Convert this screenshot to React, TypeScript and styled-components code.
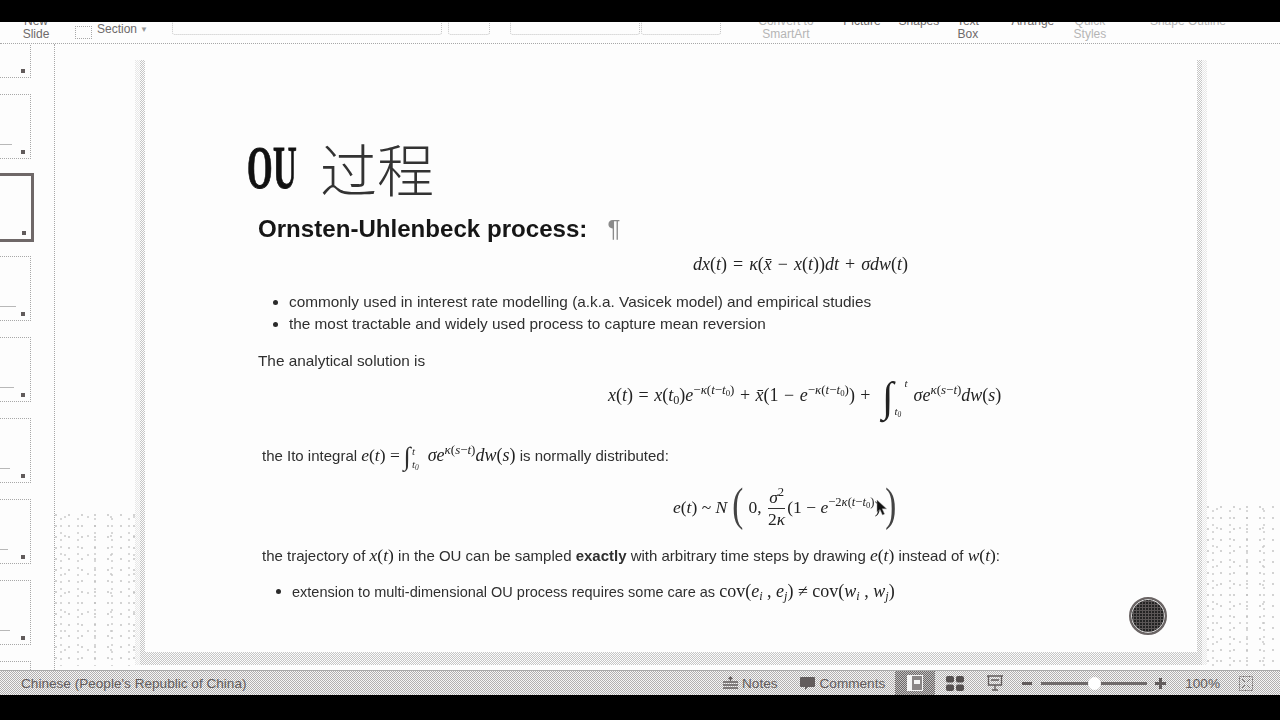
import styled, { createGlobalStyle } from "styled-components";

const GlobalStyle = createGlobalStyle`
  html, body { margin: 0; padding: 0; background: #000; }
  body { font-family: "Liberation Sans", Arial, sans-serif; }
`;

const stipple = `
  background-image:
    radial-gradient(circle at 1px 1px, #bcbcbc 0.6px, transparent 0.9px),
    radial-gradient(circle at 1px 1px, #c4c4c4 0.6px, transparent 0.9px),
    radial-gradient(circle at 1px 1px, #c4c4c4 0.6px, transparent 0.9px);
  background-size: 13px 11px, 17px 7px, 23px 19px;
  background-position: 0 0, 5px 4px, 9px 2px;
`;

const checker = `
  background-image: repeating-conic-gradient(#b2b0b0 0 25%, #f6f6f6 0 50%);
  background-size: 2px 2px;
`;

const Page = styled.div`
  width: 1280px;
  height: 720px;
  display: flex;
  flex-direction: column;
  overflow: hidden;
  background: #000;
`;

const TopBlack = styled.div`
  height: 22px;
  flex: none;
  background: #000;
`;

const Ribbon = styled.div`
  height: 21px;
  flex: none;
  display: flex;
  align-items: flex-end;
  overflow: hidden;
  background: #fdfdfd;
  border-bottom: 1px dotted #a8a8a8;
`;

const RibbonLabel = styled.div<{ $left: number; $width: number; $faint?: boolean; $oneLine?: boolean }>`
  flex: none;
  margin-left: ${(p) => p.$left}px;
  width: ${(p) => p.$width}px;
  padding-bottom: ${(p) => (p.$oneLine ? 15 : 2)}px;
  font-size: 12px;
  line-height: 13px;
  text-align: center;
  white-space: nowrap;
  color: ${(p) => (p.$faint ? "#b5b5b5" : "#6e6a6a")};
`;

const RibbonGhost = styled.div<{ $left: number; $width: number }>`
  flex: none;
  margin-left: ${(p) => p.$left}px;
  margin-bottom: 8px;
  width: ${(p) => p.$width}px;
  height: 14px;
  box-sizing: border-box;
  border: 1px dotted #c4c4c4;
  border-top: none;
  border-radius: 0 0 3px 3px;
`;

const SectionIcon = styled.div`
  flex: none;
  margin-left: 23px;
  margin-bottom: 4px;
  width: 17px;
  height: 13px;
  box-sizing: border-box;
  border: 1px dotted #a8a8a8;
`;

const SectionLabel = styled.div`
  flex: none;
  margin-left: 5px;
  margin-bottom: 6px;
  font-size: 12px;
  line-height: 14px;
  color: #6e6a6a;
`;

const Caret = styled.span`
  font-size: 8px;
  margin-left: 3px;
  color: #999;
  vertical-align: 1px;
`;

const Main = styled.div`
  flex: 1;
  display: flex;
  min-height: 0;
  background: #fdfdfd;
`;

const Sidebar = styled.aside`
  width: 54px;
  flex: none;
  overflow: hidden;
  border-right: 1px dotted #a8a8a8;
`;

const ThumbList = styled.div`
  margin-top: -31px;
  display: flex;
  flex-direction: column;
  gap: 16px;
`;

const Thumb = styled.div<{ $active?: boolean }>`
  position: relative;
  flex: none;
  box-sizing: border-box;
  width: ${(p) => (p.$active ? 34 : 31)}px;
  height: ${(p) => (p.$active ? 69 : 65)}px;
  margin: ${(p) => (p.$active ? "-2px 0" : "0")};
  border: ${(p) => (p.$active ? "3px solid #6f6868" : "1px dotted #a8a8a8")};
  border-left: none;
`;

const ThumbMark = styled.span`
  position: absolute;
  right: 5px;
  bottom: 4px;
  width: 4px;
  height: 4px;
  background: #615b5b;
`;

const ThumbLine = styled.span<{ $width: number }>`
  position: absolute;
  left: 0;
  bottom: 13px;
  width: ${(p) => p.$width}px;
  height: 1px;
  background: #b8b8b8;
`;

const Editor = styled.div`
  position: relative;
  flex: 1;
  padding: 11px 0 0 80px;
  display: flex;
  align-items: flex-start;
  &::before,
  &::after {
    content: "";
    position: absolute;
    bottom: 4px;
    ${stipple}
  }
  &::before {
    left: 0;
    width: 80px;
    height: 152px;
  }
  &::after {
    right: 0;
    width: 73px;
    height: 160px;
  }
`;

const SlideFrame = styled.div`
  position: relative;
  z-index: 1;
  padding: 5px 10px 13px;
  background-image:
    linear-gradient(#fdfdfd 5px, transparent 5px),
    linear-gradient(to right, rgba(253, 253, 253, 0.6) 5px, transparent 5px),
    linear-gradient(to left, rgba(253, 253, 253, 0.6) 5px, transparent 5px),
    repeating-conic-gradient(#c6c6c6 0 25%, #fdfdfd 0 50%);
  background-size: auto, auto, auto, 2px 2px;
`;

const Slide = styled.section`
  position: relative;
  width: 1052px;
  height: 592px;
  box-sizing: border-box;
  padding-left: 113px;
  display: flex;
  flex-direction: column;
  background: #fdfdfd;
  color: #2f2f2f;
  font-size: 15.35px;
  filter: blur(0.35px);
`;

const Title = styled.h1`
  margin: 78px 0 0 -11px;
  height: 58px;
  display: flex;
  align-items: center;
  font-weight: 400;
  color: #111;
`;

const TitleLatin = styled.span`
  display: inline-block;
  width: 73px;
  font-family: "Liberation Serif", serif;
  font-weight: 700;
  font-size: 62px;
  line-height: 58px;
  letter-spacing: 1px;
  -webkit-text-stroke: 1px #111;
  transform: scaleX(0.53);
  transform-origin: left center;
`;

const TitleCjk = styled.span`
  font-family: "Noto Sans CJK SC", sans-serif;
  font-weight: 300;
  font-size: 57px;
  line-height: 58px;
  color: #333;
`;

const Heading = styled.h2`
  margin: 19px 0 0;
  height: 28px;
  display: flex;
  align-items: center;
  font-size: 24.1px;
  font-weight: 700;
  color: #161616;
`;

const Pilcrow = styled.span`
  margin-left: 20px;
  font-weight: 400;
  color: #8b8b8b;
`;

const Display = styled.div<{ $top: number; $height: number; $indent: number; $size?: number; $word?: number }>`
  margin: ${(p) => p.$top}px 0 0 ${(p) => p.$indent}px;
  height: ${(p) => p.$height}px;
  line-height: ${(p) => p.$height}px;
  white-space: pre;
  font-family: "Liberation Serif", serif;
  font-size: ${(p) => p.$size ?? 18}px;
  word-spacing: ${(p) => p.$word ?? 0}px;
  color: #222;
`;

const Para = styled.p<{ $top: number; $height: number; $indent?: number; $size?: number }>`
  margin: ${(p) => p.$top}px 0 0 ${(p) => p.$indent ?? 0}px;
  height: ${(p) => p.$height}px;
  line-height: ${(p) => p.$height}px;
  font-size: ${(p) => p.$size ?? 15.35}px;
  white-space: pre;
`;

const BulletList = styled.ul<{ $top: number; $indent: number; $size?: number }>`
  list-style: none;
  margin: ${(p) => p.$top}px 0 0 ${(p) => p.$indent}px;
  padding: 0;
  font-size: ${(p) => p.$size ?? 15.35}px;
`;

const Bullet = styled.li`
  position: relative;
  height: 22px;
  line-height: 22px;
  white-space: pre;
  &::before {
    content: "";
    position: absolute;
    left: -16px;
    top: 9px;
    width: 5px;
    height: 5px;
    border-radius: 50%;
    background: #2b2b2b;
  }
`;

const InlineMath = styled.span<{ $size?: number }>`
  font-family: "Liberation Serif", serif;
  font-size: ${(p) => p.$size ?? 17.5}px;
  color: #222;
`;

const V = styled.i`
  font-family: "Liberation Serif", serif;
`;

const Sup = styled.sup`
  font-size: 0.72em;
  line-height: 0;
  vertical-align: 0.55em;
`;

const Sub = styled.sub`
  font-size: 0.68em;
  line-height: 0;
  vertical-align: -0.25em;
`;

const Integral = styled.span<{ $size: number; $before: number }>`
  font-family: "Liberation Serif", serif;
  font-size: ${(p) => p.$size}px;
  line-height: 1;
  vertical-align: middle;
  margin: 0 1px 0 ${(p) => p.$before}px;
`;

const Limits = styled.span<{ $gap: number; $after: number }>`
  display: inline-flex;
  flex-direction: column;
  vertical-align: middle;
  gap: ${(p) => p.$gap}px;
  margin-right: ${(p) => p.$after}px;
  font-family: "Liberation Serif", serif;
  font-size: 11px;
  line-height: 10px;
  font-style: italic;
`;

const UpperLimit = styled.span<{ $skew?: number }>`
  padding-left: ${(p) => p.$skew ?? 0}px;
`;

const BigParen = styled.span`
  font-size: 46px;
  line-height: 46px;
  display: inline-block;
  vertical-align: middle;
  margin: -8px 3px 0;
  font-weight: 400;
  color: #444;
  transform: scaleX(0.72);
`;

const Fraction = styled.span`
  display: inline-flex;
  flex-direction: column;
  align-items: center;
  vertical-align: middle;
  margin: 0 2px 0 2px;
  line-height: 21px;
`;

const FractionTop = styled.span`
  padding: 0 1px;
  border-bottom: 1px solid #333;
`;

const RecordButton = styled.div`
  position: absolute;
  left: 984px;
  top: 537px;
  width: 38px;
  height: 38px;
  box-sizing: border-box;
  border-radius: 50%;
  border: 2px solid #6a6464;
  box-shadow: inset 0 0 0 1px #d8d8d8;
  background-color: #5a5656;
  background-image: radial-gradient(circle at 1px 1px, #222 0.7px, transparent 1px);
  background-size: 3px 3px;
`;

const Cursor = styled.svg`
  position: absolute;
  left: 731px;
  top: 439px;
`;

const StatusBar = styled.footer`
  height: 25px;
  flex: none;
  display: flex;
  align-items: center;
  box-sizing: border-box;
  border-top: 1px solid #a9a9a9;
  ${checker}
  font-size: 13.6px;
  color: #625c5c;
`;

const Language = styled.span`
  margin-left: 21px;
  width: 227px;
  flex: none;
  white-space: nowrap;
`;

const StatusItem = styled.span<{ $left: number }>`
  display: flex;
  align-items: center;
  flex: none;
  margin-left: ${(p) => p.$left}px;
`;

const ViewButton = styled.span`
  flex: none;
  margin-left: 10px;
  width: 40px;
  height: 24px;
  display: flex;
  align-items: center;
  justify-content: center;
  background-image: repeating-conic-gradient(#6b6767 0 25%, #c2c0c0 0 50%);
  background-size: 2px 2px;
`;

const ZoomTrack = styled.span`
  position: relative;
  flex: none;
  margin-left: 9px;
  width: 106px;
  height: 3px;
  background: #6f6a6a;
`;

const ZoomKnob = styled.span`
  position: absolute;
  left: 47px;
  top: -5px;
  width: 13px;
  height: 13px;
  border-radius: 50%;
  background: #fff;
`;

const BottomBlack = styled.div`
  height: 25px;
  flex: none;
  background: #000;
`;

const thumbs = [
  { line: 0 },
  { line: 12 },
  { line: 0, active: true },
  { line: 16 },
  { line: 14 },
  { line: 10 },
  { line: 8 },
  { line: 10 },
  { line: 0 },
];

export default function App() {
  return (
    <>
      <GlobalStyle />
      <Page>
        <TopBlack />
        <Ribbon>
          <RibbonLabel $left={20} $width={32}>
            New
            <br />
            Slide
          </RibbonLabel>
          <SectionIcon />
          <SectionLabel>
            Section
            <Caret>▼</Caret>
          </SectionLabel>
          <RibbonGhost $left={24} $width={270} />
          <RibbonGhost $left={6} $width={42} />
          <RibbonGhost $left={20} $width={130} />
          <RibbonGhost $left={1} $width={80} />
          <RibbonLabel $left={36} $width={58} $faint>
            Convert to
            <br />
            SmartArt
          </RibbonLabel>
          <RibbonLabel $left={25} $width={44} $oneLine>
            Picture
          </RibbonLabel>
          <RibbonLabel $left={13} $width={44} $oneLine>
            Shapes
          </RibbonLabel>
          <RibbonLabel $left={12} $width={30}>
            Text
            <br />
            Box
          </RibbonLabel>
          <RibbonLabel $left={26} $width={48} $oneLine>
            Arrange
          </RibbonLabel>
          <RibbonLabel $left={15} $width={36} $faint>
            Quick
            <br />
            Styles
          </RibbonLabel>
          <RibbonLabel $left={40} $width={80} $faint $oneLine>
            Shape Outline
          </RibbonLabel>
        </Ribbon>
        <Main>
          <Sidebar>
            <ThumbList>
              {thumbs.map((t, i) => (
                <Thumb key={i} $active={t.active}>
                  {t.line > 0 && <ThumbLine $width={t.line} />}
                  <ThumbMark />
                </Thumb>
              ))}
            </ThumbList>
          </Sidebar>
          <Editor>
            <SlideFrame>
              <Slide>
                <Title>
                  <TitleLatin>OU</TitleLatin>
                  <TitleCjk>过程</TitleCjk>
                </Title>
                <Heading>
                  Ornsten-Uhlenbeck process:
                  <Pilcrow>¶</Pilcrow>
                </Heading>
                <Display $top={9} $height={24} $indent={435} $word={1.5}>
                  <V>dx</V>(<V>t</V>) = <V>κ</V>(<V>x̄</V> − <V>x</V>(<V>t</V>))<V>dt</V> + <V>σdw</V>(<V>t</V>)
                </Display>
                <BulletList $top={15} $indent={31}>
                  <Bullet>commonly used in interest rate modelling (a.k.a. Vasicek model) and empirical studies</Bullet>
                  <Bullet>the most tractable and widely used process to capture mean reversion</Bullet>
                </BulletList>
                <Para $top={16} $height={19}>
                  The analytical solution is
                </Para>
                <Display $top={0} $height={50} $indent={350} $word={1}>
                  <V>x</V>(<V>t</V>) = <V>x</V>(<V>t</V>
                  <Sub>0</Sub>)<V>e</V>
                  <Sup>
                    −<V>κ</V>(<V>t</V>−<V>t</V>
                    <Sub>0</Sub>)
                  </Sup>
                  {" + "}
                  <V>x̄</V>(1 − <V>e</V>
                  <Sup>
                    −<V>κ</V>(<V>t</V>−<V>t</V>
                    <Sub>0</Sub>)
                  </Sup>
                  {") + "}
                  <Integral $size={42} $before={6}>∫</Integral>
                  <Limits $gap={18} $after={6}>
                    <UpperLimit $skew={10}>t</UpperLimit>
                    <span>
                      t<Sub>0</Sub>
                    </span>
                  </Limits>
                  <V>σe</V>
                  <Sup>
                    <V>κ</V>(<V>s</V>−<V>t</V>)
                  </Sup>
                  <V>dw</V>(<V>s</V>)
                </Display>
                <Para $top={20} $height={30} $indent={4} $size={15}>
                  {"the Ito integral "}
                  <InlineMath>
                    <V>e</V>(<V>t</V>) =
                  </InlineMath>
                  <Integral $size={26} $before={4}>∫</Integral>
                  <Limits $gap={3} $after={9}>
                    <UpperLimit>t</UpperLimit>
                    <span>
                      t<Sub>0</Sub>
                    </span>
                  </Limits>
                  <InlineMath $size={18}>
                    <V>σe</V>
                    <Sup>
                      <V>κ</V>(<V>s</V>−<V>t</V>)
                    </Sup>
                    <V>dw</V>(<V>s</V>)
                  </InlineMath>
                  {" is normally distributed:"}
                </Para>
                <Display $top={7} $height={60} $indent={415} $size={17.5}>
                  <V>e</V>(<V>t</V>) ~ <V>N</V>
                  <BigParen>(</BigParen>
                  {"0, "}
                  <Fraction>
                    <FractionTop>
                      <V>σ</V>
                      <Sup>2</Sup>
                    </FractionTop>
                    <span>
                      2<V>κ</V>
                    </span>
                  </Fraction>
                  (1 − <V>e</V>
                  <Sup>
                    −2<V>κ</V>(<V>t</V>−<V>t</V>
                    <Sub>0</Sub>)
                  </Sup>
                  )<BigParen>)</BigParen>
                </Display>
                <Para $top={7} $height={22} $indent={4} $size={15}>
                  {"the trajectory of "}
                  <InlineMath>
                    <V>x</V>(<V>t</V>)
                  </InlineMath>
                  {" in the OU can be sampled "}
                  <b>exactly</b>
                  {" with arbitrary time steps by drawing "}
                  <InlineMath>
                    <V>e</V>(<V>t</V>)
                  </InlineMath>
                  {" instead of "}
                  <InlineMath>
                    <V>w</V>(<V>t</V>)
                  </InlineMath>
                  :
                </Para>
                <BulletList $top={14} $indent={34} $size={14.5}>
                  <Bullet>
                    {"extension to multi-dimensional OU process requires some care as "}
                    <InlineMath $size={18}>
                      cov(<V>e</V>
                      <Sub>
                        <V>i</V>
                      </Sub>
                      {" , "}
                      <V>e</V>
                      <Sub>
                        <V>j</V>
                      </Sub>
                      {") ≠ cov("}
                      <V>w</V>
                      <Sub>
                        <V>i</V>
                      </Sub>
                      {" , "}
                      <V>w</V>
                      <Sub>
                        <V>j</V>
                      </Sub>
                      )
                    </InlineMath>
                  </Bullet>
                </BulletList>
                <Cursor width="12" height="18" viewBox="0 0 12 18">
                  <path d="M1 1 L1 13 L4 10.5 L6.5 16 L8.5 15 L6.2 9.8 L10.5 9.8 Z" fill="#111" stroke="#999" strokeWidth="0.5" />
                </Cursor>
                <RecordButton />
              </Slide>
            </SlideFrame>
          </Editor>
        </Main>
        <StatusBar>
          <Language>Chinese (People's Republic of China)</Language>
          <StatusItem $left={475}>
            <svg width="15" height="14" viewBox="0 0 15 14" fill="none" stroke="#625c5c" strokeWidth="1.3">
              <path d="M7.5 5V1M5.5 3l2-2 2 2M0 6h15M0 9h15M0 12h15" />
            </svg>
          </StatusItem>
          <StatusItem $left={4}>Notes</StatusItem>
          <StatusItem $left={22}>
            <svg width="15" height="15" viewBox="0 0 15 15">
              <path d="M1 1h13a1 1 0 0 1 1 1v8a1 1 0 0 1-1 1H8l-3 3v-3H1a1 1 0 0 1-1-1V2a1 1 0 0 1 1-1z" fill="#625c5c" />
            </svg>
          </StatusItem>
          <StatusItem $left={5}>Comments</StatusItem>
          <ViewButton>
            <svg width="16" height="16" viewBox="0 0 16 16">
              <rect width="16" height="16" fill="#f4f4f4" />
              <rect x="5" y="1" width="10" height="14" fill="#8a8686" />
              <rect x="7" y="5" width="6" height="4" fill="#f4f4f4" />
            </svg>
          </ViewButton>
          <StatusItem $left={11}>
            <svg width="18" height="15" viewBox="0 0 18 15" fill="#555050">
              <rect width="8" height="6.5" rx="2" />
              <rect x="10" width="8" height="6.5" rx="2" />
              <rect y="8.5" width="8" height="6.5" rx="2" />
              <rect x="10" y="8.5" width="8" height="6.5" rx="2" />
            </svg>
          </StatusItem>
          <StatusItem $left={23}>
            <svg width="16" height="16" viewBox="0 0 16 16" fill="none" stroke="#625c5c" strokeWidth="1.3">
              <path d="M0 1h16M1.5 1v9h13V1M8 10v5M5 15h6M4 5h8" />
            </svg>
          </StatusItem>
          <StatusItem $left={19}>
            <svg width="10" height="3" viewBox="0 0 10 3">
              <rect width="10" height="3" fill="#625c5c" />
            </svg>
          </StatusItem>
          <ZoomTrack>
            <ZoomKnob />
          </ZoomTrack>
          <StatusItem $left={8}>
            <svg width="11" height="11" viewBox="0 0 11 11" fill="#625c5c">
              <path d="M4 0h3v4h4v3H7v4H4V7H0V4h4z" />
            </svg>
          </StatusItem>
          <StatusItem $left={19}>100%</StatusItem>
          <StatusItem $left={19}>
            <svg width="14" height="15" viewBox="0 0 14 15" fill="none" stroke="#7a7575" strokeWidth="1">
              <rect x="0.5" y="0.5" width="13" height="14" strokeDasharray="2 1" />
              <path d="M3 3l3 3M11 3L8 6M3 12l3-3M11 12L8 9" />
            </svg>
          </StatusItem>
        </StatusBar>
        <BottomBlack />
      </Page>
    </>
  );
}
